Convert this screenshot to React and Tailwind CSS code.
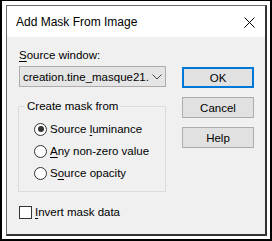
import React from 'react';

// Underlined access-key letter
const Key = ({ children }) => <span className="underline underline-offset-[2px]">{children}</span>;

const Radio = ({ checked, children }) => (
  <div className="flex h-[22px] items-center">
    <span className="flex h-[13px] w-[13px] items-center justify-center rounded-full border border-[#333] bg-white">
      {checked && <span className="h-[6px] w-[6px] rounded-full bg-[#333]" />}
    </span>
    <span className="ml-[3px]">{children}</span>
  </div>
);

const Button = ({ children, primary }) => (
  <div
    className={
      'flex h-[21px] w-[72px] items-center justify-center bg-[#e1e1e1] ' +
      (primary ? 'border-2 border-[#0078d7]' : 'border border-[#adadad]')
    }
  >
    {children}
  </div>
);

export default function App() {
  return (
    <div className="h-[241px] w-[272px] border-b-2 border-l-2 border-r-2 border-t border-black bg-white pl-[4px] pt-[4px] font-['Liberation_Sans',Arial,sans-serif] text-[11.5px] leading-[16px] text-black">
      <div className="flex h-[231px] w-[261px] flex-col border-b-2 border-l border-r-2 border-t border-b-[#333] border-l-[#6b6b6b] border-r-[#333] border-t-[#6b6b6b]">
        {/* title bar */}
        <div className="flex h-[31px] items-center justify-between bg-white pl-[9px] pr-[9px] pt-[1px]">
          <span className="text-[12px]">Add Mask From Image</span>
          <svg width="11" height="11" viewBox="0 0 11 11" className="mr-[1px]">
            <path d="M0.5 0.5 L10.5 10.5 M10.5 0.5 L0.5 10.5" stroke="#000" strokeWidth="1" />
          </svg>
        </div>

        {/* body */}
        <div className="flex flex-1 bg-[#f0f0f0] pl-[12px]">
          <div className="flex w-[147px] flex-col">
            <div className="pt-[10px]">
              <Key>S</Key>ource window:
            </div>
            <div className="mt-[3px] flex h-[21px] items-center border border-[#adadad] bg-[#e5e5e5] pl-[3px] pr-[4px]">
              <span className="flex-1 whitespace-nowrap">creation.tine_masque21.</span>
              <svg width="10" height="6" viewBox="0 0 10 6" className="ml-[3px] shrink-0">
                <polyline points="0.5,0.5 5,5 9.5,0.5" fill="none" stroke="#444" strokeWidth="1" />
              </svg>
            </div>

            <fieldset className="-ml-[1px] mt-[11px] h-[94px] w-[148px] border border-[#dcdcdc]">
              <legend className="ml-[6px] px-[2px]">Create mask from</legend>
              <div className="pl-[15px] pt-[4px]">
                <Radio checked>
                  Source <Key>l</Key>uminance
                </Radio>
                <Radio>
                  <Key>A</Key>ny non-zero value
                </Radio>
                <Radio>
                  S<Key>o</Key>urce opacity
                </Radio>
              </div>
            </fieldset>

            <div className="mt-[12px] flex h-[16px] items-center">
              <span className="h-[13px] w-[13px] border border-[#333] bg-white" />
              <span className="ml-[3px]">
                <Key>I</Key>nvert mask data
              </span>
            </div>
          </div>

          <div className="ml-[16px] flex flex-col gap-[9px] pt-[30px]">
            <Button primary>OK</Button>
            <Button>Cancel</Button>
            <Button>Help</Button>
          </div>
        </div>
      </div>
    </div>
  );
}
